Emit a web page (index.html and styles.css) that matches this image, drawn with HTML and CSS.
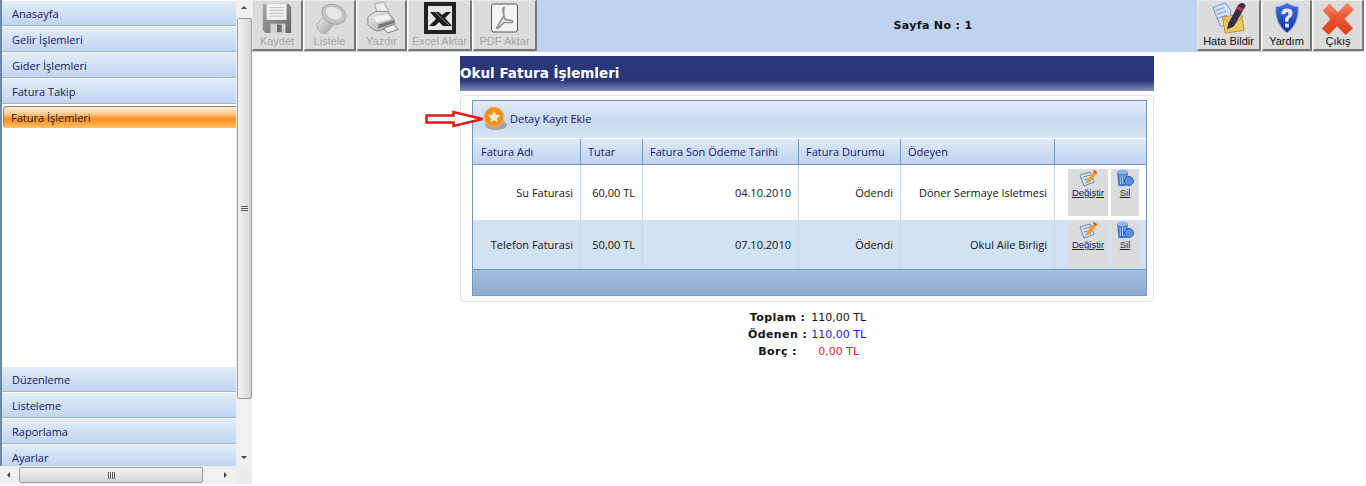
FILE: index.html
```html
<!DOCTYPE html>
<html lang="tr">
<head>
    <meta charset="UTF-8">
    <meta name="viewport" content="width=device-width, initial-scale=1.0">
    <title>Okul Fatura İşlemleri</title>
    <link rel="stylesheet" href="styles.css">
</head>
<body>
    <svg class="defs" width="0" height="0">
        <defs>
            <linearGradient id="gDisk" x1="0" y1="0" x2="1" y2="1"><stop offset="0" stop-color="#a8a8a8"/><stop offset="1" stop-color="#666"/></linearGradient>
            <linearGradient id="gLens" x1="0" y1="0" x2="1" y2="1"><stop offset="0" stop-color="#f0f0f0"/><stop offset="1" stop-color="#a0a0a0"/></linearGradient>
            <linearGradient id="gCross" x1="0" y1="0" x2="0" y2="1"><stop offset="0" stop-color="#f58a64"/><stop offset=".5" stop-color="#e8522e"/><stop offset="1" stop-color="#d8431f"/></linearGradient>
            <linearGradient id="gShield" x1="0" y1="0" x2="0" y2="1"><stop offset="0" stop-color="#3f72e0"/><stop offset="1" stop-color="#0f2f9c"/></linearGradient>
        </defs>
    </svg>
    <div class="app">
        <div class="side">
            <div class="side-body">
                <div class="menu">
                    <div class="menu-group">
                        <a class="menu-item">Anasayfa</a>
                        <a class="menu-item">Gelir İşlemleri</a>
                        <a class="menu-item">Gider İşlemleri</a>
                        <a class="menu-item">Fatura Takip</a>
                        <a class="menu-active">Fatura İşlemleri</a>
                    </div>
                    <div class="menu-group">
                        <a class="menu-item">Düzenleme</a>
                        <a class="menu-item">Listeleme</a>
                        <a class="menu-item">Raporlama</a>
                        <a class="menu-item menu-last">Ayarlar</a>
                    </div>
                </div>
                <div class="vscroll">
                    <span class="tri-up"></span>
                    <div class="vthumb"><span class="vgrip"></span></div>
                    <span class="tri-down"></span>
                </div>
            </div>
            <div class="hscroll">
                <span class="tri-left"></span>
                <div class="hthumb"><span class="hgrip"></span></div>
                <span class="tri-right"></span>
                <span class="corner"></span>
            </div>
        </div>

        <div class="main">
            <div class="toolbar">
                <div class="tools">
                    <div class="tool tool-off t1">
                        <svg width="36" height="36" viewBox="0 0 36 36"><path d="M3 3h27l3 3v28H6l-3-3z" fill="url(#gDisk)"/><path d="M7 3h21v17H7z" fill="#f1f1f1"/><path d="M10 7h15M10 10h15M10 13h15M10 16h15" stroke="#bcbcbc"/><path d="M11 24h16v10H11z" fill="#d0d0d0"/><path d="M18 25h5v8h-5z" fill="#6c6c6c"/></svg>
                        <span>Kaydet</span>
                    </div>
                    <div class="tool tool-off t2">
                        <svg width="36" height="36" viewBox="0 0 36 36"><path d="M4 25l7-8 10 9-7 8q-4 1-7-2t-3-7z" fill="url(#gLens)" stroke="#a5a5a5"/><ellipse cx="22" cy="14" rx="13" ry="10" transform="rotate(25 22 14)" fill="#c4c4c4" stroke="#a2a2a2"/><ellipse cx="22" cy="13" rx="9" ry="6" transform="rotate(25 22 13)" fill="#e8e8e8"/></svg>
                        <span>Listele</span>
                    </div>
                    <div class="tool tool-off t3">
                        <svg width="36" height="36" viewBox="0 0 36 36"><path d="M10 3l10-2 5 10-12 2z" fill="#ececec" stroke="#9c9c9c"/><path d="M3 17l8-6h13l7 9v7L13 32q-7-2-10-7z" fill="url(#gLens)" stroke="#8a8a8a"/><path d="M8 17l16-3 4 5-16 4z" fill="#f2f2f2"/><path d="M14 25l17-5v3L14 29z" fill="#787878"/><path d="M20 29l10-4 5 5-11 4z" fill="#f0f0f0" stroke="#777"/></svg>
                        <span>Yazdır</span>
                    </div>
                    <div class="tool tool-off t4">
                        <svg width="32" height="32" viewBox="0 0 32 32"><path d="M0 0h32v32H0z" fill="#222"/><path d="M4 4h24v24H4z" fill="#e6e6e6"/><path d="M6 10h9l3 3 4-3h5l-6 6 7 8h-9l-4-4-4 4H5l7-7z" fill="#1c1c1c"/><path d="M11 10l14 13" stroke="#b8b8b8" stroke-width=".8"/></svg>
                        <span>Excel Aktar</span>
                    </div>
                    <div class="tool tool-off t5">
                        <svg width="27" height="29" viewBox="0 0 27 29"><rect x=".5" y=".5" width="26" height="28" rx="2" fill="#f3f3f3" stroke="#555"/><path d="M13 4q-2 1 0 8l-7 12q-1 2 2 0l5-5h8q2-1-1-2l-6-1q-2-5-1-12z" fill="none" stroke="#8f8f8f" stroke-width="1.6"/></svg>
                        <span>PDF Aktar</span>
                    </div>
                </div>
                <div class="page-no">Sayfa No : 1</div>
                <div class="tools">
                    <div class="tool t6">
                        <svg width="36" height="36" viewBox="0 0 36 36"><path d="M1 7l13-5 6 8-1 14-10 3z" fill="#cfe0f8" stroke="#6f93cf"/><path d="M4 10l9-3M5 14l10-3M6 18l10-3" stroke="#6f93cf"/><path d="M11 17l20-3 3 17-20 3z" fill="#eec963" stroke="#b38c35"/><path d="M12 18l10 8 11-10" fill="none" stroke="#b38c35"/><path d="M17 24L28 4q3-3 6-1t0 5L23 27l-7 3z" fill="#352f4a"/><path d="M27 5l6 3-1.500 3-6-3z" fill="#c8305a"/></svg>
                        <span>Hata Bildir</span>
                    </div>
                    <div class="tool t7">
                        <svg width="34" height="36" viewBox="0 0 34 36"><path d="M17 2q6 4 12 4 1 18-12 28Q4 24 5 6q6 0 12-4z" fill="url(#gShield)" stroke="#9fb4e6"/><path d="M11 14q0-6 6-6t6 5q0 3-3 5l-1.500 1.500V22h-3.500v-4l3-3q1.500-2 0-3-2-1-3 2z" fill="#e6e6f0"/><path d="M15 24h4v4h-4z" fill="#e6e6f0"/></svg>
                        <span>Yardım</span>
                    </div>
                    <div class="tool t8">
                        <svg width="36" height="36" viewBox="0 0 36 36"><path d="M2 10l7-7 9 9 10-10 7 7-10 10 9 10-8 7-9-9-9 9-7-7 9-10z" fill="url(#gCross)" stroke="#e0a080" stroke-width=".6"/></svg>
                        <span>Çıkış</span>
                    </div>
                </div>
            </div>

            <div class="content">
                <h1 class="title">Okul Fatura İşlemleri</h1>
                <div class="panel">
                    <svg class="arrow" width="60" height="18" viewBox="0 0 60 18"><path d="M1.500 5.500h27V2l29 7-29 7v-3.500h-27z" fill="#fff" stroke="#e01818" stroke-width="2.500"/></svg>
                    <div class="grid">
                        <div class="grid-top">
                            <svg width="24" height="26" viewBox="0 0 24 26"><ellipse cx="13" cy="19" rx="11" ry="5" fill="#a2a2a2"/><circle cx="11" cy="11" r="10" fill="#f0901c"/><circle cx="11" cy="11" r="10" fill="none" stroke="#e7b98a"/><path d="M11 5l1.800 3.800 4.200.5-3.100 2.900.8 4.100L11 14.300 7.300 16.300l.8-4.100L5 9.300l4.200-.5z" fill="#fdeecb"/></svg>
                            <span>Detay Kayıt Ekle</span>
                        </div>
                        <table class="list">
                            <thead>
                                <tr>
                                    <th class="c1">Fatura Adı</th>
                                    <th class="c2">Tutar</th>
                                    <th class="c3">Fatura Son Ödeme Tarihi</th>
                                    <th class="c4">Fatura Durumu</th>
                                    <th class="c5">Ödeyen</th>
                                    <th class="c6"></th>
                                </tr>
                            </thead>
                            <tbody>
                                <tr class="row-a">
                                    <td>Su Faturasi</td>
                                    <td>60,00 TL</td>
                                    <td>04.10.2010</td>
                                    <td>Ödendi</td>
                                    <td>Döner Sermaye Isletmesi</td>
                                    <td class="acts">
                                        <div class="act-wrap">
                                            <a class="act act-edit"><svg width="20" height="18" viewBox="0 0 20 18"><path d="M2 6l10-3 4 10-10 4z" fill="#dde8f8" stroke="#5b7fc0"/><path d="M5 8l7-2M6 11l7-2M7 14l6-2" stroke="#5b7fc0"/><path d="M9 11l7-9 3 2-7 9-4 1z" fill="#f0a020"/><path d="M15 2l1-1 3 2-1 2z" fill="#d84030"/></svg>Değiştir</a>
                                            <a class="act act-del"><svg width="18" height="18" viewBox="0 0 18 18"><path d="M1 3h11l-1.500 14h-8z" fill="#3f74d8"/><ellipse cx="6.500" cy="3" rx="5.500" ry="2.500" fill="#8db6f0"/><path d="M4 6l.5 9M6.500 6v9M9 6l-.5 9" stroke="#a9c8f5"/><circle cx="13" cy="12" r="4.500" fill="#5a90e8" stroke="#2e5cb8"/></svg>Sil</a>
                                        </div>
                                    </td>
                                </tr>
                                <tr class="row-b">
                                    <td>Telefon Faturasi</td>
                                    <td>50,00 TL</td>
                                    <td>07.10.2010</td>
                                    <td>Ödendi</td>
                                    <td>Okul Aile Birligi</td>
                                    <td class="acts">
                                        <div class="act-wrap">
                                            <a class="act act-edit"><svg width="20" height="18" viewBox="0 0 20 18"><path d="M2 6l10-3 4 10-10 4z" fill="#dde8f8" stroke="#5b7fc0"/><path d="M5 8l7-2M6 11l7-2M7 14l6-2" stroke="#5b7fc0"/><path d="M9 11l7-9 3 2-7 9-4 1z" fill="#f0a020"/><path d="M15 2l1-1 3 2-1 2z" fill="#d84030"/></svg>Değiştir</a>
                                            <a class="act act-del"><svg width="18" height="18" viewBox="0 0 18 18"><path d="M1 3h11l-1.500 14h-8z" fill="#3f74d8"/><ellipse cx="6.500" cy="3" rx="5.500" ry="2.500" fill="#8db6f0"/><path d="M4 6l.5 9M6.500 6v9M9 6l-.5 9" stroke="#a9c8f5"/><circle cx="13" cy="12" r="4.500" fill="#5a90e8" stroke="#2e5cb8"/></svg>Sil</a>
                                        </div>
                                    </td>
                                </tr>
                            </tbody>
                        </table>
                        <div class="grid-foot"></div>
                    </div>
                </div>
                <table class="totals">
                    <tr><th>Toplam :</th><td>110,00 TL</td></tr>
                    <tr><th>Ödenen :</th><td class="blue">110,00 TL</td></tr>
                    <tr><th>Borç :</th><td class="red">0,00 TL</td></tr>
                </table>
            </div>
        </div>
    </div>
</body>
</html>
```

FILE: styles.css
```css
html, body {
    margin: 0;
    height: 100%;
    overflow: hidden;
    background: #fff;
}

.defs {
    display: block;
    height: 0;
}

.app {
    display: flex;
    height: 486px;
}

/* left menu */
.side {
    width: 252px;
    height: 484px;
    flex: none;
    display: flex;
    flex-direction: column;
}

.side-body {
    flex: 1;
    display: flex;
    min-height: 0;
}

.menu {
    width: 234px;
    border-left: 2px solid #6d87a8;
    display: flex;
    flex-direction: column;
    justify-content: space-between;
    font-family: "Open Sans", "Noto Sans", sans-serif;
    font-size: 11px;
}

.menu-group {
    display: flex;
    flex-direction: column;
}

.menu-item {
    height: 24px;
    line-height: 25px;
    padding-left: 10px;
    color: #15156e;
    background: linear-gradient(#e3ecf7, #c0d6f0);
    border-top: 1px solid #fff;
    border-bottom: 1px solid #9fb3cb;
    display: block;
}

.menu-last {
    height: 21px;
    border-bottom: 0;
    line-height: 25px;
}

.menu-active {
    display: block;
    height: 20px;
    margin: 2px 0 0 1px;
    padding-left: 7px;
    line-height: 22px;
    color: #1a1a1a;
    border: 1px solid #8c8465;
    border-bottom-color: #f5c94e;
    border-right: 0;
    border-radius: 4px 0 0 4px;
    background: linear-gradient(#fdeedd, #fdc98d 35%, #fb8f25 60%, #fdb95e);
}

/* fake windows scrollbars */
.vscroll {
    width: 16px;
    background: #f0f0f0;
    display: flex;
    flex-direction: column;
    align-items: center;
}

.vthumb {
    width: 15px;
    height: 381px;
    margin-top: 9px;
    border: 1px solid #9a9a9a;
    border-radius: 2px;
    box-sizing: border-box;
    background: linear-gradient(90deg, #f4f4f4, #d4d4d4);
    display: flex;
    align-items: center;
    justify-content: center;
}

.vgrip {
    width: 7px;
    height: 5px;
    background: repeating-linear-gradient(#555 0 1px, #eee 1px 2px);
}

.tri-up, .tri-down, .tri-left, .tri-right {
    width: 0;
    height: 0;
    display: block;
    flex: none;
}

.tri-up {
    margin-top: 6px;
    border: 3px solid transparent;
    border-top: 0;
    border-bottom: 3px solid #444;
}

.tri-down {
    margin-top: 57px;
    border: 3px solid transparent;
    border-bottom: 0;
    border-top: 3px solid #444;
}

.hscroll {
    height: 18px;
    flex: none;
    background: #f0f0f0;
    display: flex;
    align-items: center;
}

.hthumb {
    width: 184px;
    height: 16px;
    margin-left: 9px;
    border: 1px solid #9a9a9a;
    border-radius: 2px;
    box-sizing: border-box;
    background: linear-gradient(#f4f4f4, #d4d4d4);
    display: flex;
    align-items: center;
    justify-content: center;
}

.hgrip {
    width: 7px;
    height: 7px;
    background: repeating-linear-gradient(90deg, #555 0 1px, #eee 1px 2px);
}

.tri-left {
    margin-left: 7px;
    border: 3px solid transparent;
    border-left: 0;
    border-right: 3px solid #444;
}

.tri-right {
    margin-left: 21px;
    border: 3px solid transparent;
    border-right: 0;
    border-left: 3px solid #444;
}

.corner {
    flex: 1;
    align-self: stretch;
    margin-left: 9px;
    background: #ececec;
}

/* top toolbar */
.main {
    flex: 1;
    min-width: 0;
    display: flex;
    flex-direction: column;
}

.toolbar {
    height: 52px;
    margin-right: 2px;
    background: #bed3ee;
    display: flex;
    justify-content: space-between;
    align-items: flex-start;
}

.tools {
    display: flex;
    background: #fff;
}

.tool {
    box-sizing: border-box;
    height: 51px;
    margin-right: 1px;
    background: #dcdcdc;
    border: 1px solid #ececec;
    border-right: 2px solid #777;
    border-bottom: 2px solid #777;
    display: flex;
    flex-direction: column;
    align-items: center;
    font-family: "Liberation Sans", Arial, sans-serif;
    font-size: 11px;
    color: #111;
}

.tools .tool:last-child {
    margin-right: 0;
}

.tool svg {
    height: 34px;
    flex: none;
}

.tool span {
    line-height: 13px;
    white-space: nowrap;
}

.tool-off span {
    color: #a6a6a6;
}

.t1 { width: 51px; }
.t2 { width: 52px; }
.t3 { width: 50px; }
.t4 { width: 64px; }
.t5 { width: 64px; }
.t6 { width: 64px; }
.t7 { width: 50px; }
.t8 { width: 51px; }

.page-no {
    flex: 1;
    padding-left: 132px;
    text-align: center;
    line-height: 51px;
    font-family: "DejaVu Sans", Verdana, sans-serif;
    font-size: 11px;
    font-weight: bold;
    letter-spacing: .35px;
    color: #111;
}

/* page content */
.content {
    width: 694px;
    margin: 4px 0 0 208px;
}

.title {
    margin: 0;
    height: 35px;
    line-height: 35px;
    font-family: "DejaVu Sans", Verdana, sans-serif;
    font-size: 13.5px;
    font-weight: bold;
    color: #fff;
    background: linear-gradient(#2a3a7c, #29367a 70%, #7c8cb8);
}

.panel {
    position: relative;
    box-sizing: border-box;
    height: 207px;
    margin-top: 4px;
    padding: 4px 6px 0 11px;
    border: 1px solid #dfe5ec;
    border-radius: 4px;
}

.arrow {
    position: absolute;
    left: -36px;
    top: 14px;
}

.grid {
    border: 1px solid #6c97c6;
    font-family: "Open Sans", "Noto Sans", sans-serif;
    font-size: 11px;
}

.grid-top {
    box-sizing: border-box;
    height: 38px;
    display: flex;
    align-items: center;
    gap: 3px;
    padding: 0 0 2px 10px;
    color: #15156e;
    background: linear-gradient(#e4edf8, #c8daf1 50%, #d6e3f4);
    border-bottom: 1px solid #fff;
}

.list {
    width: 100%;
    border-collapse: collapse;
    table-layout: fixed;
}

.list th {
    height: 25px;
    padding: 0 0 0 7px;
    text-align: left;
    font-weight: normal;
    color: #15156e;
    background: linear-gradient(#e0eaf7, #bcd3ef);
    border-bottom: 1px solid #6c97c6;
    border-right: 1px solid #6c97c6;
}

.list th:last-child {
    border-right: 0;
}

.list .c1 { width: 99px; padding-left: 8px; }
.c2 { width: 54px; }
.c3 { width: 148px; }
.c4 { width: 94px; }
.c5 { width: 146px; }

.list td {
    padding: 0 7px 0 0;
    text-align: right;
    color: #111;
    border-right: 1px solid #c7d9ee;
}

.list td:last-child {
    border-right: 0;
}

.row-a td {
    height: 55px;
    background: #fff;
}

.row-b td {
    height: 49px;
    background: #d2e2f4;
}

.list .acts {
    padding: 0;
    vertical-align: top;
}

.act-wrap {
    display: flex;
    padding: 4px 0 0 13px;
    gap: 3px;
}

.row-b .act-wrap {
    padding-top: 1px;
}

.act {
    height: 47px;
    background: #dcdcdc;
    display: flex;
    flex-direction: column;
    align-items: center;
    font-family: "Liberation Sans", Arial, sans-serif;
    font-size: 9.5px;
    line-height: 12px;
    color: #15156e;
    text-decoration: underline;
}

.act svg {
    flex: none;
}

.act-edit { width: 40px; }
.act-del { width: 28px; }

.grid-foot {
    height: 26px;
    background: linear-gradient(#a5bddc, #8eabd2);
    border-top: 1px solid #6c97c6;
    box-sizing: border-box;
}

.totals {
    margin: 7px auto 0;
    border-collapse: collapse;
    font-family: "DejaVu Sans", Verdana, sans-serif;
    font-size: 11px;
    color: #111;
}

.totals th, .totals td {
    height: 17px;
    padding: 0;
    text-align: center;
}

.totals th {
    letter-spacing: .4px;
}

.totals td {
    padding-left: 4px;
}

.totals .blue { color: #1a1aee; }
.totals .red { color: #ee1a2a; }
```
